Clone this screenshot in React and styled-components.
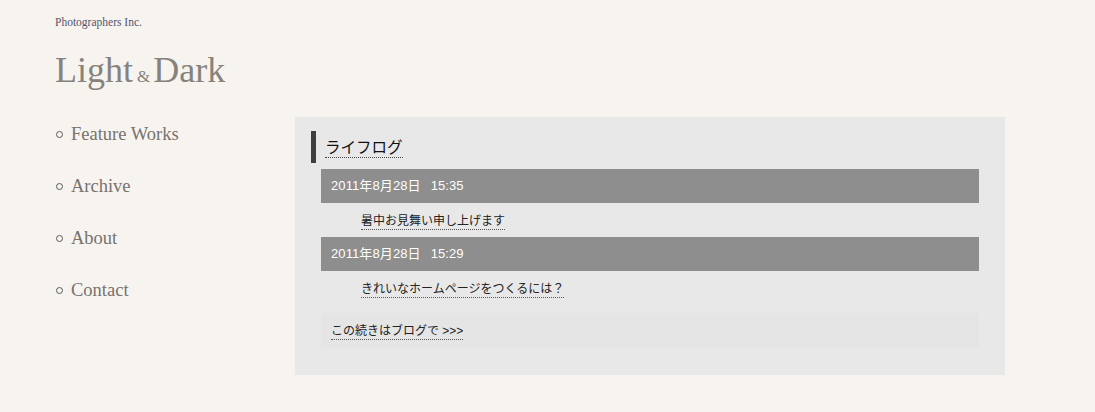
import React from "react";
import styled, { createGlobalStyle } from "styled-components";

const navItems = ["Feature Works", "Archive", "About", "Contact"];

const posts = [
  { date: "2011年8月28日", time: "15:35", title: "暑中お見舞い申し上げます" },
  { date: "2011年8月28日", time: "15:29", title: "きれいなホームページをつくるには？" },
];

const App = () => {
  return (
    <Page>
      <GlobalStyle />
      <Header>
        <Company>Photographers Inc.</Company>
        <Logo>
          Light<Amp>&amp;</Amp>Dark
        </Logo>
      </Header>
      <Body>
        <Sidebar>
          <NavList>
            {navItems.map((item) => (
              <NavItem key={item}>
                <NavLink href="#">{item}</NavLink>
              </NavItem>
            ))}
          </NavList>
        </Sidebar>
        <Main>
          <Heading>
            <HeadingText>ライフログ</HeadingText>
          </Heading>
          <PostList>
            {posts.map((post, i) => (
              <React.Fragment key={i}>
                <DateBar>
                  {post.date}
                  <Time>{post.time}</Time>
                </DateBar>
                <TitleRow>
                  <DottedLink href="#">{post.title}</DottedLink>
                </TitleRow>
              </React.Fragment>
            ))}
            <MoreBox>
              <DottedLink href="#">この続きはブログで &gt;&gt;&gt;</DottedLink>
            </MoreBox>
          </PostList>
        </Main>
      </Body>
    </Page>
  );
};

export default App;

const GlobalStyle = createGlobalStyle`
  html, body {
    margin: 0;
    padding: 0;
    background: #f7f4f0;
  }
`;

const Page = styled.div`
  min-height: 412px;
  background: #f7f4f0;
  padding-left: 55px;
`;

const Header = styled.header`
  padding-top: 15px;
`;

const Company = styled.div`
  font-family: "Liberation Serif", serif;
  font-size: 11.5px;
  line-height: 14px;
  color: #56536a;
`;

const Logo = styled.h1`
  margin: 21px 0 0;
  height: 40px;
  font-family: "Liberation Serif", serif;
  font-weight: normal;
  font-size: 36px;
  line-height: 40px;
  color: #86827c;
`;

const Amp = styled.span`
  font-size: 17px;
  line-height: 1;
  margin: 0 3px 0 4px;
`;

const Body = styled.div`
  display: flex;
  margin-top: 27px;
`;

const Sidebar = styled.nav`
  width: 240px;
  padding-top: 6px;
`;

const NavList = styled.ul`
  list-style: none;
  margin: 0;
  padding: 0;
`;

const NavItem = styled.li`
  display: flex;
  align-items: center;
  height: 22px;
  margin-bottom: 30px;
  &::before {
    content: "";
    width: 5px;
    height: 5px;
    border: 1px solid #5a5a5a;
    border-radius: 50%;
    margin: 0 8px 0 1px;
  }
`;

const NavLink = styled.a`
  font-family: "Liberation Serif", serif;
  font-size: 18.5px;
  line-height: 22px;
  color: #77726c;
  text-decoration: none;
`;

const Main = styled.section`
  width: 668px;
  background: #e8e8e8;
  padding: 14px 26px 27px 16px;
  font-family: "Liberation Sans", "Noto Sans CJK JP", sans-serif;
`;

const Heading = styled.h2`
  margin: 0;
  height: 32px;
  display: flex;
  align-items: center;
  border-left: 5px solid #3f3f3f;
  padding-left: 9px;
  font-weight: normal;
`;

const HeadingText = styled.span`
  font-size: 15.5px;
  line-height: 19px;
  color: #111;
  border-bottom: 1px dotted #444;
  margin-top: 1px;
`;

const PostList = styled.div`
  margin: 6px 0 0 10px;
`;

const DateBar = styled.div`
  height: 34px;
  line-height: 34px;
  background: #8e8e8e;
  color: #fff;
  font-size: 13px;
  letter-spacing: 0.1px;
  padding-left: 10px;
`;

const Time = styled.span`
  margin-left: 10px;
`;

const TitleRow = styled.div`
  height: 34px;
  display: flex;
  align-items: center;
  padding-left: 40px;
  font-size: 12px;
`;

const DottedLink = styled.a`
  color: #222;
  text-decoration: none;
  border-bottom: 1px dotted #555;
  line-height: 16px;
  margin-top: 2px;
`;

const MoreBox = styled.div`
  margin-top: 8px;
  height: 35px;
  display: flex;
  align-items: center;
  padding-left: 10px;
  background: #e5e5e5;
  font-size: 12px;
`;
